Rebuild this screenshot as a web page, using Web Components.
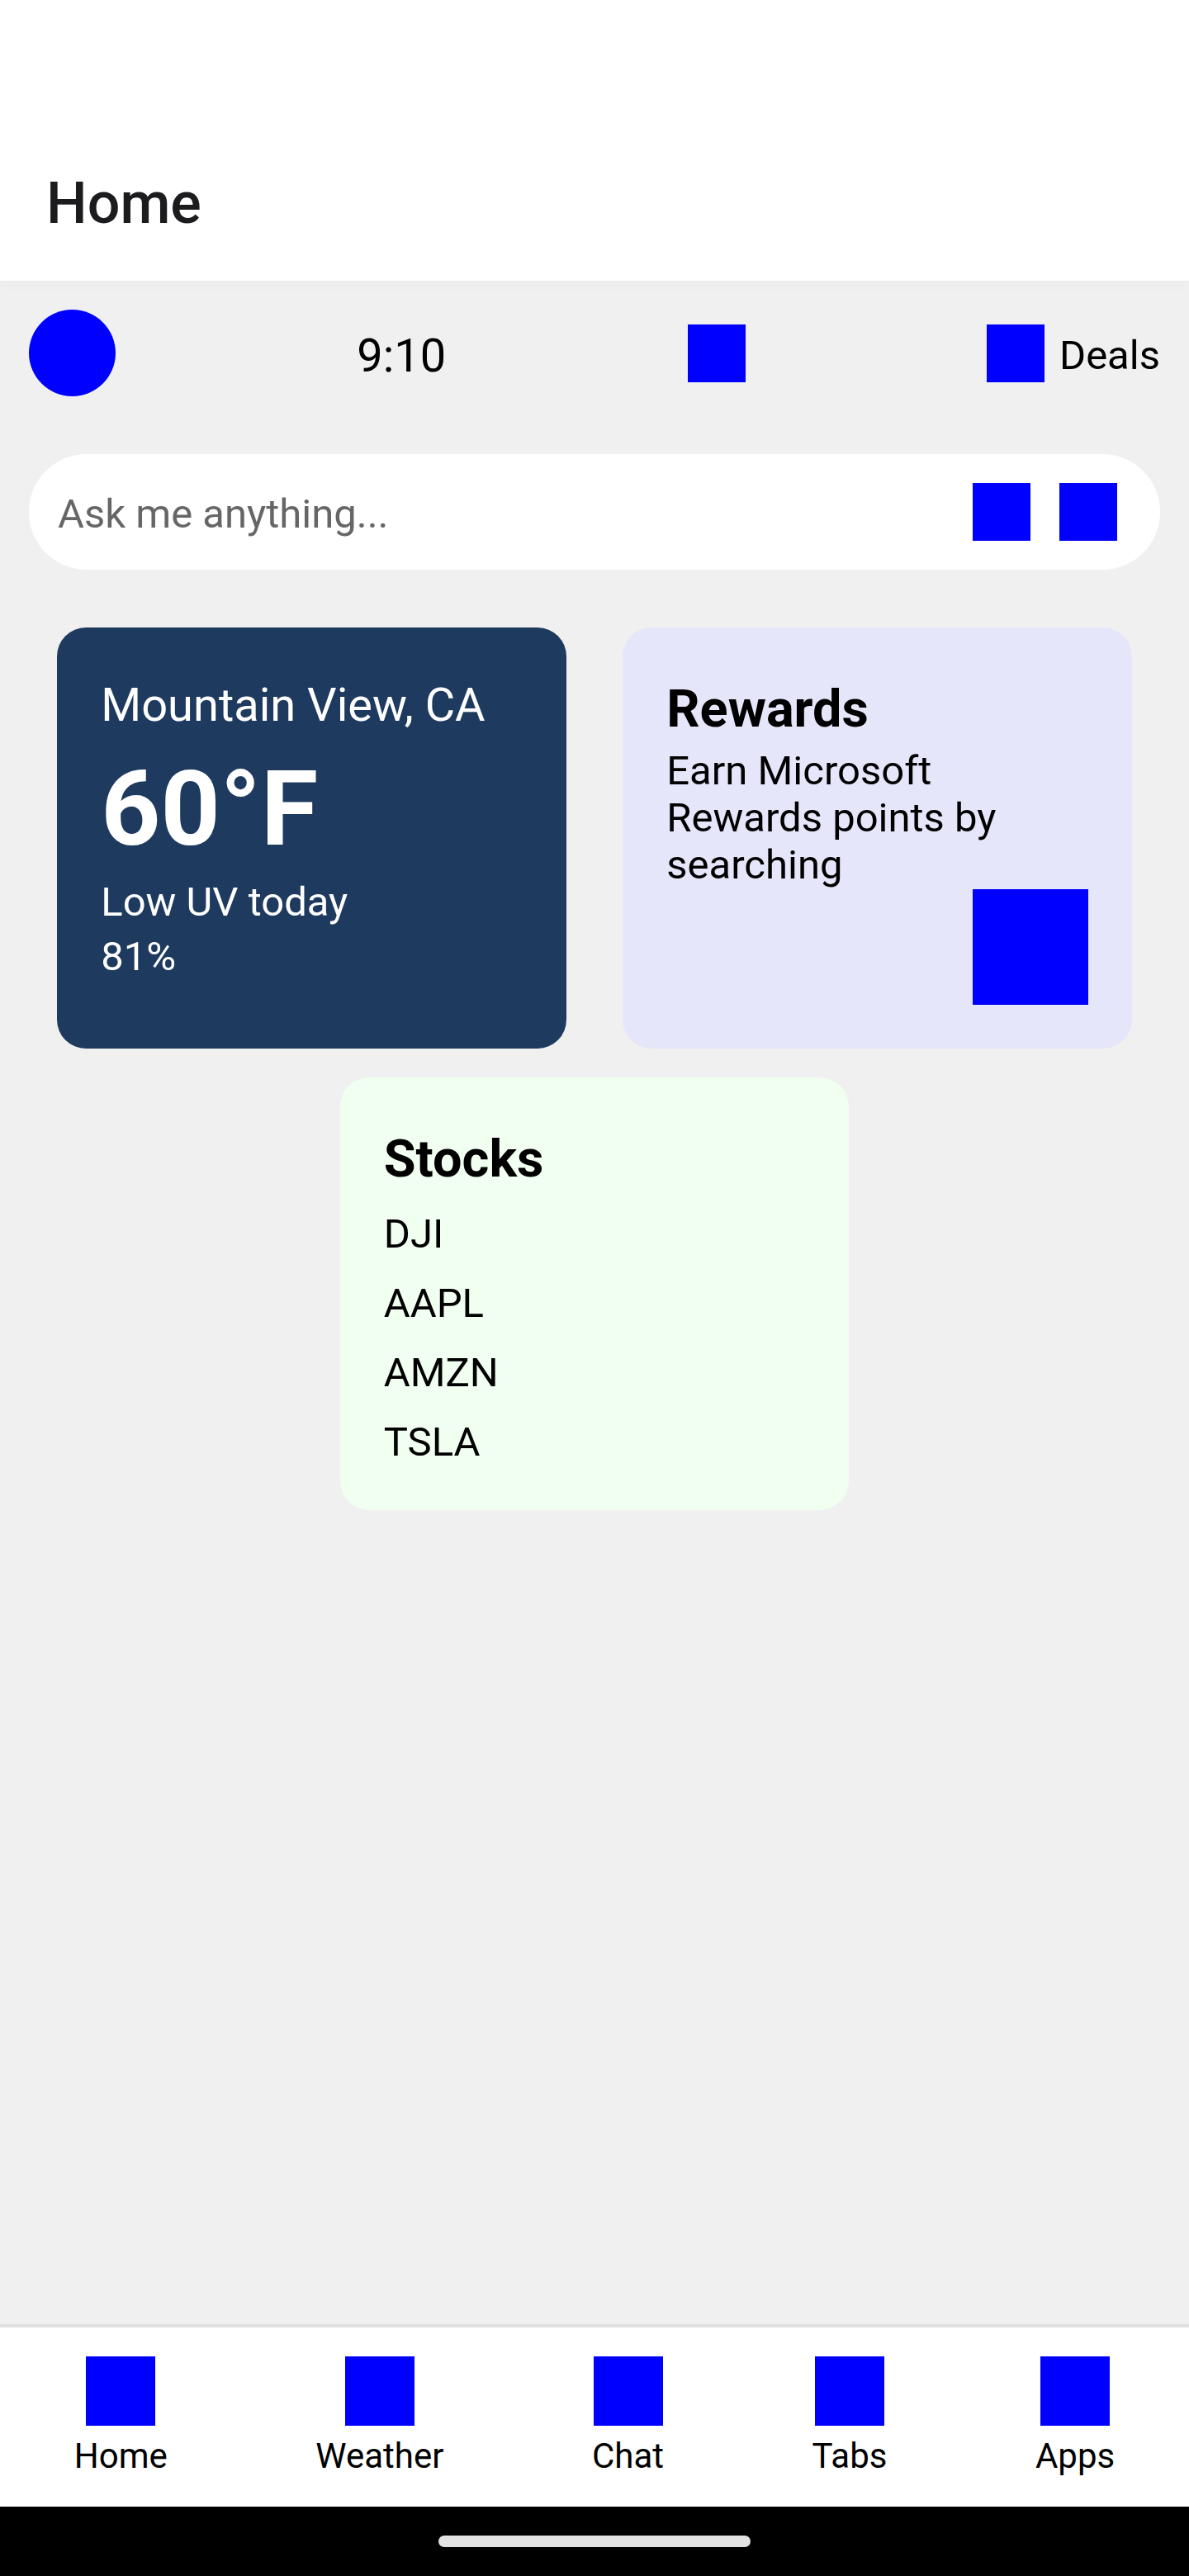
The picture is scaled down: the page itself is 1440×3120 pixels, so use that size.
<!DOCTYPE html>
<html lang="en">
<head>
<meta charset="utf-8">
<meta name="viewport" content="width=device-width, initial-scale=1">
<title>Home</title>
<style>
  html, body { height: 100%; }
  body { margin: 0; font-family: Roboto, "Liberation Sans", sans-serif; color: #000; background: #f0f0f0; }
</style>
</head>
<body>
<home-screen></home-screen>
<script>
  function define(name, html) {
    const template = document.createElement('template');
    template.innerHTML = '<style>*{box-sizing:border-box;margin:0}:host{box-sizing:border-box}</style>' + html;
    customElements.define(name, class extends HTMLElement {
      constructor() {
        super();
        this.attachShadow({ mode: 'open' }).append(template.content.cloneNode(true));
      }
    });
  }

  define('image-block', `
    <style>
      :host { display: block; flex: none; width: var(--size, 70px); height: var(--size, 70px); background: #00f; }
      :host([round]) { border-radius: 50%; }
    </style>`);

  define('app-header', `
    <style>
      :host { display: block; padding-top: 152px; background: #fff; box-shadow: 0 2px 18px rgba(0, 0, 0, .03); }
      h1 { padding: 0 56px; font-size: 70px; line-height: 188px; font-weight: 500; color: #1c1c1e; }
    </style>
    <h1><slot></slot></h1>`);

  define('top-row', `
    <style>
      :host { display: flex; align-items: center; justify-content: space-between; padding: 35px; }
      time, a { line-height: 66px; }
      time { padding-top: 6px; font-size: 56px; }
      a { display: flex; align-items: center; gap: 18px; font-size: 49px; color: inherit; text-decoration: none; }
      a span { padding-top: 6px; }
      button { display: block; padding: 0; border: 0; background: none; }
    </style>
    <image-block round style="--size:105px"></image-block>
    <time>9:10</time>
    <button aria-label="Notifications"><image-block></image-block></button>
    <a href="#deals"><image-block></image-block><span>Deals</span></a>`);

  define('search-bar', `
    <style>
      :host { display: block; padding: 35px; }
      form { display: flex; align-items: center; gap: 35px; height: 140px; padding: 0 52px 0 35px; border-radius: 70px; background: #fff; }
      input { flex: 1; min-width: 0; height: 70px; padding: 4px 0 0; border: 0; outline: 0; background: none; font: inherit; font-size: 49px; color: #000; }
      input::placeholder { color: #666; opacity: 1; }
      button { display: block; padding: 0; border: 0; background: none; }
    </style>
    <form role="search">
      <input type="text" aria-label="Ask me anything" placeholder="Ask me anything...">
      <button type="button" aria-label="Voice"><image-block></image-block></button>
      <button type="button" aria-label="Camera"><image-block></image-block></button>
    </form>`);

  define('info-card', `
    <style>
      :host { display: flex; flex-direction: column; width: 45%; padding: 52px 53px 53px; border-radius: 35px; font-size: 49px; line-height: 57px; }
      h2 { font-size: 63px; line-height: 93px; font-weight: 700; }
    </style>
    <slot name="title"></slot>
    <slot></slot>`);

  define('weather-report', `
    <style>
      :host { display: flex; flex-direction: column; line-height: 58px; }
      .place { font-size: 56px; line-height: 84px; }
      .temp { font-size: 126px; line-height: 168px; font-weight: 700; }
      .rain { margin-top: 8px; }
    </style>
    <p class="place">Mountain View, CA</p>
    <p class="temp">60°F</p>
    <p>Low UV today</p>
    <p class="rain">81%</p>`);

  define('card-title', `
    <style>
      :host { display: block; }
      h2 { font-size: 63px; line-height: 93px; font-weight: 700; }
    </style>
    <h2><slot></slot></h2>`);

  define('stock-list', `
    <style>
      :host { display: block; }
      ul { display: flex; flex-direction: column; gap: 26px; margin-top: 16px; padding: 0; list-style: none; line-height: 58px; }
    </style>
    <ul><li>DJI</li><li>AAPL</li><li>AMZN</li><li>TSLA</li></ul>`);

  define('card-grid', `
    <style>
      :host { display: flex; flex-wrap: wrap; justify-content: space-around; row-gap: 35px; padding: 35px; }
      .weather { min-height: 510px; background: #1e3a5f; color: #fff; }
      .rewards { background: #e6e6fa; }
      .rewards image-block { margin-top: auto; align-self: flex-end; }
      .stocks { background: #f0fff0; }
    </style>
    <info-card class="weather"><weather-report></weather-report></info-card>
    <info-card class="rewards">
      <card-title>Rewards</card-title>
      <p>Earn Microsoft Rewards points by searching</p>
      <image-block style="--size:140px"></image-block>
    </info-card>
    <info-card class="stocks">
      <card-title>Stocks</card-title>
      <stock-list></stock-list>
    </info-card>`);

  define('nav-item', `
    <style>
      :host { display: block; }
      a { display: flex; flex-direction: column; align-items: center; gap: 10px; font-size: 42px; line-height: 53px; color: inherit; text-decoration: none; }
    </style>
    <a href="#"><image-block style="--size:84px"></image-block><span><slot></slot></span></a>`);

  define('bottom-nav', `
    <style>
      :host { display: block; }
      nav { display: flex; justify-content: space-around; padding: 35px 0; border-top: 4px solid #e0e0e0; background: #fff; }
    </style>
    <nav aria-label="Main">
      <nav-item>Home</nav-item>
      <nav-item>Weather</nav-item>
      <nav-item>Chat</nav-item>
      <nav-item>Tabs</nav-item>
      <nav-item>Apps</nav-item>
    </nav>`);

  define('gesture-bar', `
    <style>
      :host { display: flex; align-items: center; justify-content: center; height: 84px; background: #000; }
      div { width: 378px; height: 14px; border-radius: 7px; background: #e2e2e2; }
    </style>
    <div></div>`);

  define('home-screen', `
    <style>
      :host { display: flex; flex-direction: column; min-height: 100%; }
      main { flex: 1; }
    </style>
    <app-header>Home</app-header>
    <main>
      <top-row></top-row>
      <search-bar></search-bar>
      <card-grid></card-grid>
    </main>
    <bottom-nav></bottom-nav>
    <gesture-bar></gesture-bar>`);
</script>
</body>
</html>
